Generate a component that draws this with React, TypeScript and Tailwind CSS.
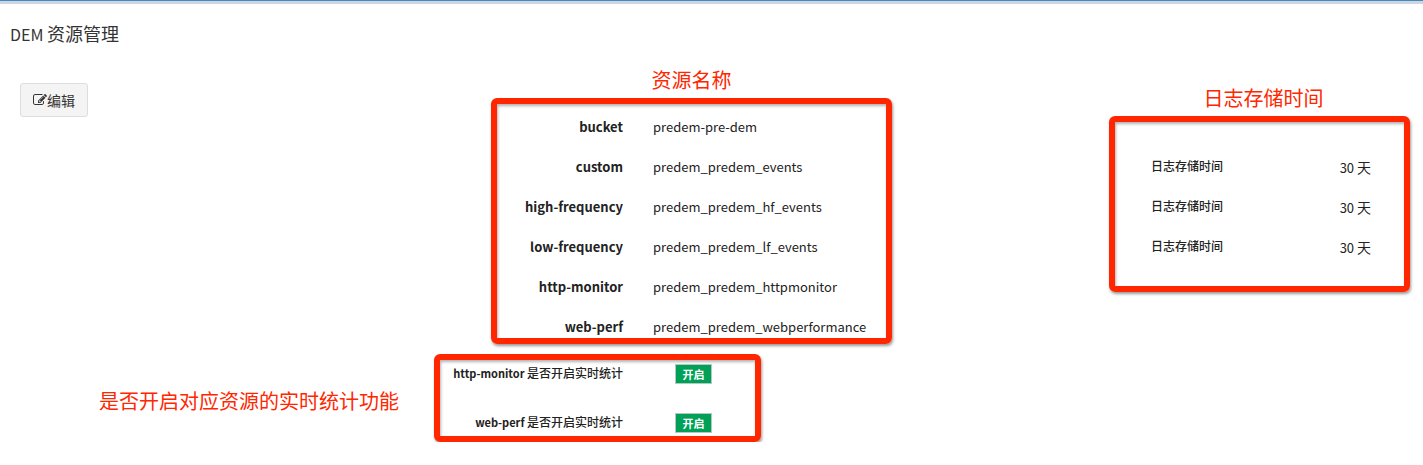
import type { ReactNode } from "react";

const resources = [
  { name: "bucket", value: "predem-pre-dem" },
  { name: "custom", value: "predem_predem_events" },
  { name: "high-frequency", value: "predem_predem_hf_events" },
  { name: "low-frequency", value: "predem_predem_lf_events" },
  { name: "http-monitor", value: "predem_predem_httpmonitor" },
  { name: "web-perf", value: "predem_predem_webperformance" },
];

const realtime = ["http-monitor", "web-perf"];

const retentionDays = [30, 30, 30];

function EditIcon() {
  return (
    <svg viewBox="0 0 1792 1792" className="size-[14px] fill-current" aria-hidden="true">
      <path d="M888 1184l116-116-152-152-116 116v56h96v96h56zm440-720q-16-16-33 1l-350 350q-17 17-1 33t33-1l350-350q17-17 1-33zm80 594v190q0 119-84.500 203.500t-203.500 84.500h-832q-119 0-203.500-84.500t-84.500-203.500v-832q0-119 84.500-203.500t203.500-84.500h832q63 0 117 25 15 7 18 23 3 17-9 29l-49 49q-14 14-32 8-23-6-45-6h-832q-66 0-113 47t-47 113v832q0 66 47 113t113 47h832q66 0 113-47t47-113v-126q0-13 9-22l64-64q15-15 35-7t20 29zm-96-738l288 288-672 672h-288v-288zm444 132l-92 92-288-288 92-92q28-28 68-28t68 28l152 152q28 28 28 68t-28 68z" />
    </svg>
  );
}

function Caption({ children }: { children: ReactNode }) {
  return <h2 className="text-center text-[20px] leading-7 text-[#ff2600]">{children}</h2>;
}

function Frame({ className, children }: { className: string; children: ReactNode }) {
  return (
    <div
      className={`rounded-md border-6 border-[#ff2600] shadow-[1px_2px_3px_rgba(0,0,0,0.4),inset_1px_2px_3px_rgba(0,0,0,0.3)] ${className}`}
    >
      {children}
    </div>
  );
}

export default function App() {
  return (
    <div className="bg-white font-['Noto_Sans_CJK_SC',sans-serif] text-[13px] leading-5 text-[#222]">
      <div className="h-1 border-t border-[#3c8dbc] bg-[#d0d3e0]" />
      <header className="px-[10px] pt-[15px]">
        <h1 className="h-7 text-[18px] leading-7 text-[#333]">
          <span className="text-[16px]">DEM </span>资源管理
        </h1>
      </header>

      <main className="grid grid-cols-[434fr_458fr_531fr] pt-[19px]">
        <section className="flex flex-col items-start pt-[17px]">
          <button
            type="button"
            className="ml-5 flex h-[34px] items-center rounded-[3px] border border-[#ddd] bg-[#f4f4f4] px-3 text-[14px] text-[#333]"
          >
            <EditIcon />
            编辑
          </button>
          <div className="mt-[270px] self-end pr-[35px]">
            <Caption>是否开启对应资源的实时统计功能</Caption>
          </div>
        </section>

        <section className="flex flex-col">
          <div className="w-[401px] self-end">
            <Caption>资源名称</Caption>
            <Frame className="mt-1 pt-[13px] pb-px">
              <dl className="flex flex-col gap-5">
                {resources.map((r) => (
                  <div key={r.name} className="flex gap-[30px]">
                    <dt className="w-[126px] text-right font-bold">{r.name}</dt>
                    <dd>{r.value}</dd>
                  </div>
                ))}
              </dl>
            </Frame>
          </div>
          <Frame className="mt-[10px] w-[327px] self-start pt-1 pb-[3px]">
            <dl className="flex flex-col gap-[29px]">
              {realtime.map((name) => (
                <div key={name} className="flex gap-[52px]">
                  <dt className="w-[183px] text-right text-[12px] leading-[18px] font-medium">
                    <span className="text-[11px] font-bold">{name} </span>是否开启实时统计
                  </dt>
                  <dd className="flex h-5 w-[37px] items-center justify-center border border-[#b5c7c4] bg-[#00a157] text-[11px] font-bold text-white">
                    开启
                  </dd>
                </div>
              ))}
            </dl>
          </Frame>
        </section>

        <section className="mr-[13px] w-[301px] justify-self-end pt-[18px]">
          <div className="pl-2">
            <Caption>日志存储时间</Caption>
          </div>
          <Frame className="mt-1 pt-[35px] pr-[33px] pb-[29px] pl-9">
            <dl className="flex flex-col gap-5">
              {retentionDays.map((days, i) => (
                <div key={i} className="flex h-5 justify-between">
                  <dt className="text-[12px] leading-[18px] font-medium">日志存储时间</dt>
                  <dd>
                    {days} <span className="text-[14px]">天</span>
                  </dd>
                </div>
              ))}
            </dl>
          </Frame>
        </section>
      </main>
    </div>
  );
}
